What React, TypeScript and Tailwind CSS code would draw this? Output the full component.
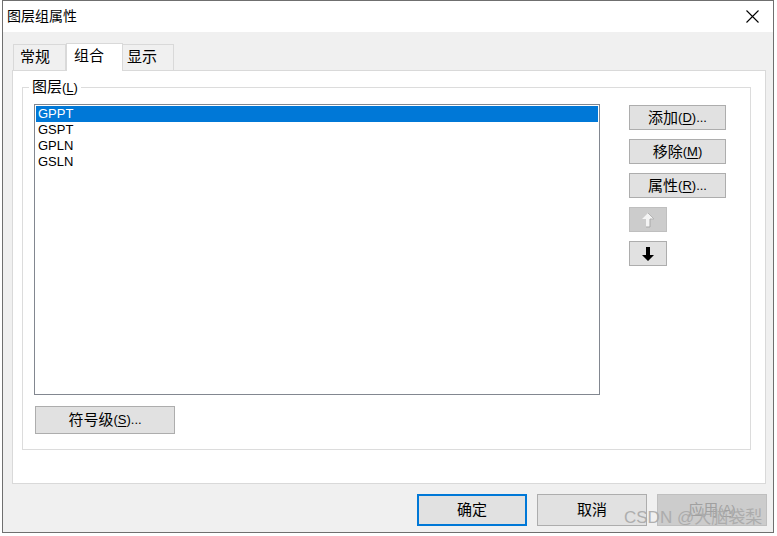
const FONT = '"Liberation Sans","Noto Sans CJK SC",sans-serif';

function Key({ k }: { k: string }) {
  return (
    <span className="text-[13px]">
      (<span className="underline underline-offset-2">{k}</span>)
    </span>
  );
}

function SideButton({ label, k, dots }: { label: string; k: string; dots?: boolean }) {
  return (
    <div className="w-[97px] h-[25px] border border-[#adadad] bg-[#e1e1e1] flex items-center justify-center text-[15px] text-black leading-none">
      <span>{label}</span>
      <Key k={k} />
      {dots && <span className="text-[13px]">...</span>}
    </div>
  );
}

function Arrow({ up }: { up?: boolean }) {
  return (
    <svg width="14" height="16" viewBox="0 0 14 16">
      {up ? (
        <g>
          <path d="M7 1 L13 7 L9 7 L9 15 L5 15 L5 7 L1 7 Z" fill="#f4f4f4" />
          <path d="M9 7 L13 7 L7 1" fill="none" stroke="#b5b5b5" strokeWidth="1" />
          <path d="M9 7 L9 15 L5 15" fill="none" stroke="#a8a8a8" strokeWidth="1" />
        </g>
      ) : (
        <path d="M5 1 L9 1 L9 9 L13 9 L7 15 L1 9 L5 9 Z" fill="#000" />
      )}
    </svg>
  );
}

export default function App() {
  const items = ["GPPT", "GSPT", "GPLN", "GSLN"];
  return (
    <div className="relative w-[777px] h-[536px] bg-white overflow-hidden" style={{ fontFamily: FONT }}>
      <div className="ml-[2px] w-[772px] h-[533px] border border-[#6f6f6f] flex flex-col">
        {/* title bar */}
        <div className="h-[31px] bg-white flex items-center justify-between pl-[4px] pr-[14px]">
          <span className="text-[14px] text-black">图层组属性</span>
          <svg width="13" height="13" viewBox="0 0 13 13">
            <path d="M0.5 0.5 L12.5 12.5 M12.5 0.5 L0.5 12.5" stroke="#000" strokeWidth="1.1" />
          </svg>
        </div>

        {/* body */}
        <div className="flex-1 bg-[#f0f0f0] pl-[9px] pt-[10px] flex flex-col">
          {/* tabs */}
          <div className="flex items-end h-[28px] pl-[1px] relative z-10">
            <div className="w-[53px] h-[26px] border border-[#d9d9d9] border-b-0 bg-[#f0f0f0] flex items-center pl-[6px] text-[15px] text-black">
              常规
            </div>
            <div className="w-[57px] h-[28px] -mb-[1px] border border-[#d9d9d9] border-b-0 bg-white flex items-center pl-[7px] pb-[2px] text-[15px] text-black">
              组合
            </div>
            <div className="w-[51px] h-[26px] border border-[#d9d9d9] border-b-0 border-l-0 bg-[#f0f0f0] flex items-center pl-[4px] text-[15px] text-black">
              显示
            </div>
          </div>

          {/* tab panel */}
          <div className="w-[754px] h-[414px] bg-white border border-[#d9d9d9] pl-[9px] pt-[16px]">
            <div className="relative w-[729px] h-[363px] border border-[#dcdcdc] pl-[11px] pt-[16px] flex flex-col">
              <div className="absolute left-[6px] -top-[11px] bg-white px-[3px] text-[15px] text-black leading-[20px]">
                图层<Key k="L" />
              </div>
              <div className="flex">
                <div className="w-[566px] h-[291px] border border-[#828790] p-[1px] text-[13px] leading-[16px]">
                  {items.map((it, i) => (
                    <div
                      key={it}
                      className={
                        i === 0
                          ? "h-[16px] bg-[#0078d7] text-white pl-[2px]"
                          : "h-[16px] text-black pl-[2px]"
                      }
                    >
                      {it}
                    </div>
                  ))}
                </div>
                <div className="ml-[29px] pt-[1px] flex flex-col gap-[9px]">
                  <SideButton label="添加" k="D" dots />
                  <SideButton label="移除" k="M" />
                  <SideButton label="属性" k="R" dots />
                  <div className="w-[38px] h-[25px] border border-[#bfbfbf] bg-[#cccccc] flex items-center justify-center">
                    <Arrow up />
                  </div>
                  <div className="w-[38px] h-[25px] border border-[#adadad] bg-[#e1e1e1] flex items-center justify-center">
                    <Arrow />
                  </div>
                </div>
              </div>
              <div className="mt-[11px] ml-[1px] w-[140px] h-[28px] border border-[#adadad] bg-[#e1e1e1] flex items-center justify-center text-[15px] text-black">
                <span>符号级</span>
                <Key k="S" />
                <span className="text-[13px]">...</span>
              </div>
            </div>
          </div>

          {/* bottom buttons */}
          <div className="mt-[10px] pr-[6px] flex justify-end gap-[10px]">
            <div className="w-[110px] h-[32px] border-2 border-[#0078d7] bg-[#e1e1e1] flex items-center justify-center text-[15px] text-black">
              确定
            </div>
            <div className="w-[110px] h-[32px] border border-[#adadad] bg-[#e1e1e1] flex items-center justify-center text-[15px] text-black">
              取消
            </div>
            <div className="w-[110px] h-[32px] border border-[#bfbfbf] bg-[#cccccc] flex items-center justify-center text-[15px] text-[#a0a0a0]">
              <span>应用</span>
              <Key k="A" />
            </div>
          </div>
        </div>
      </div>

      {/* watermark */}
      <div className="absolute left-[624px] top-[505px] text-[17px] text-[#a9a9a9] opacity-90 pointer-events-none">
        CSDN @大脑袋梨
      </div>
    </div>
  );
}
